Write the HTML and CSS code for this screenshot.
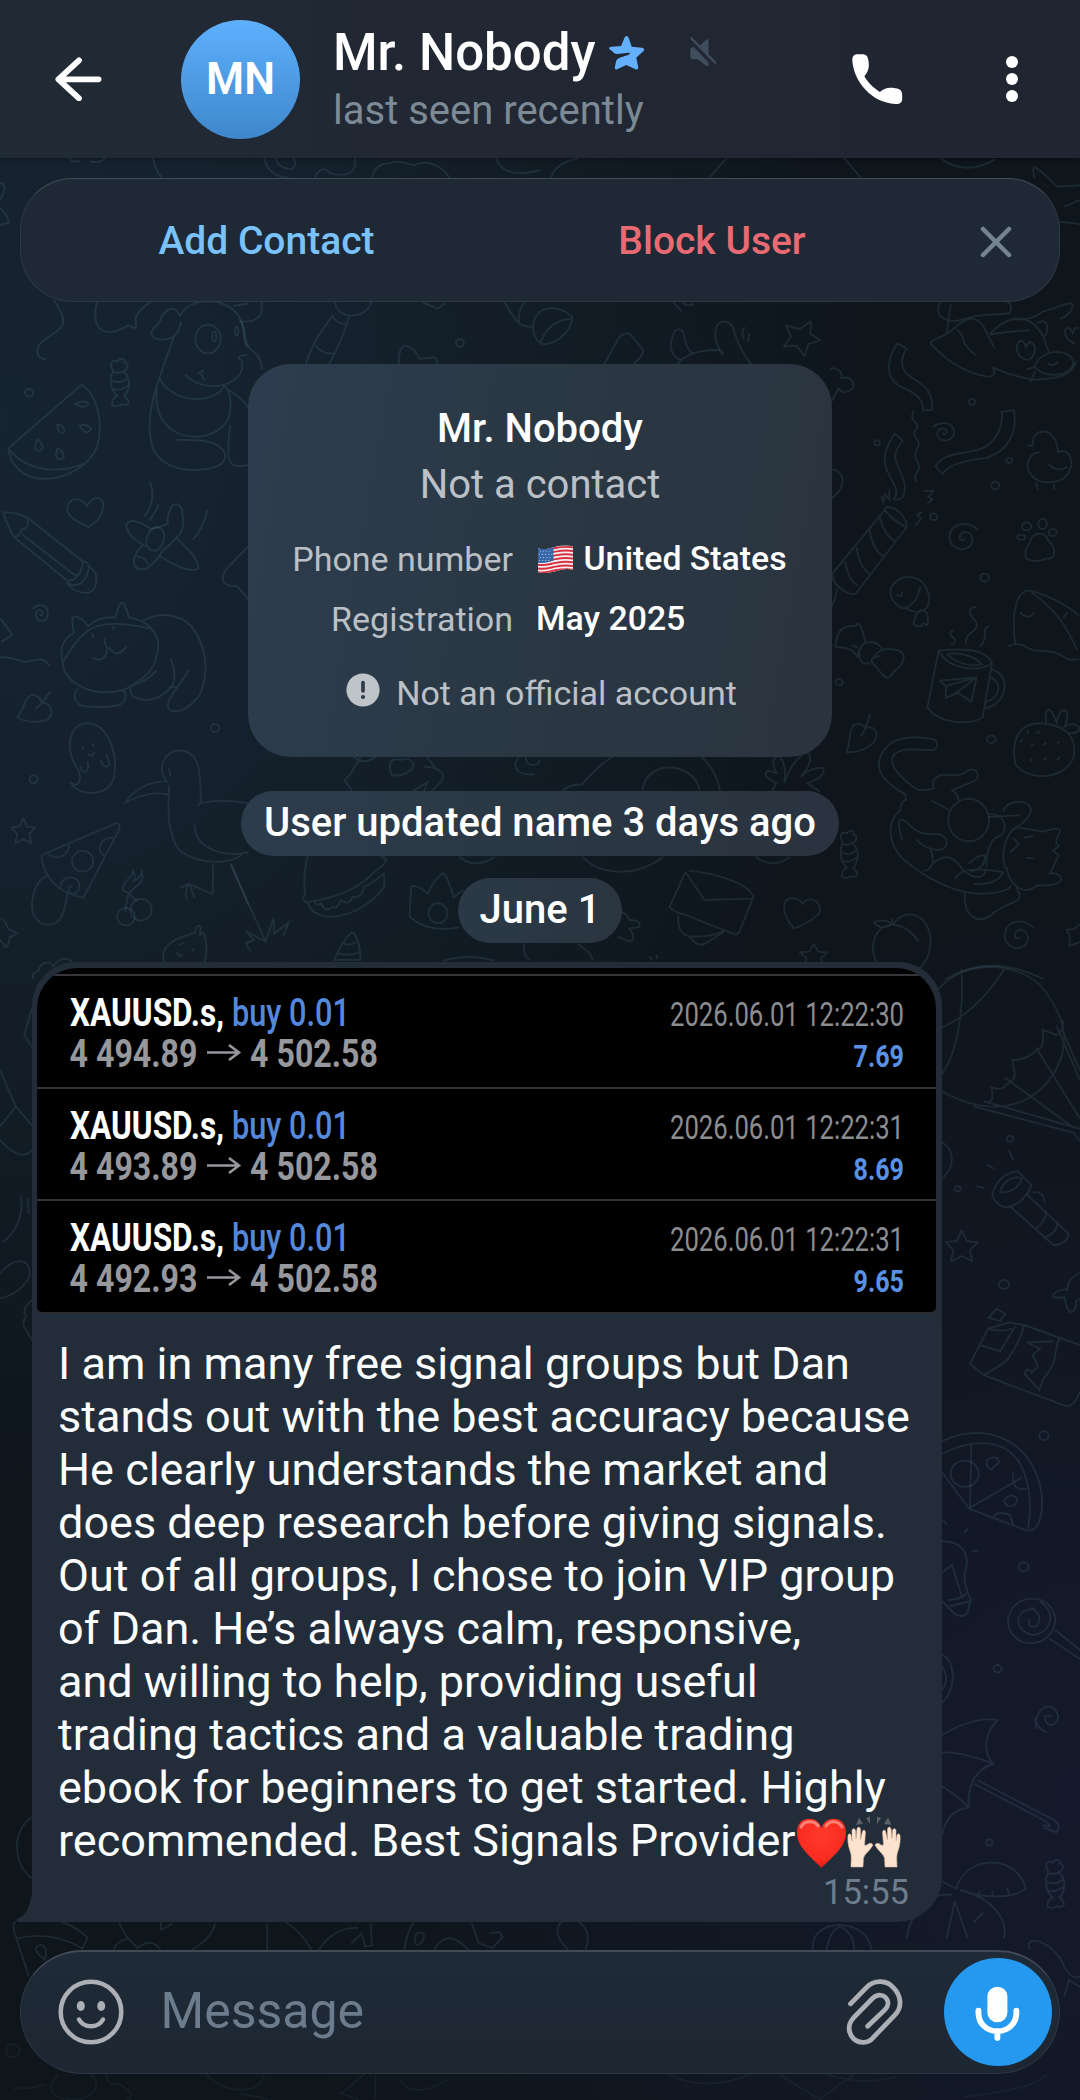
FILE: index.html
```
<!DOCTYPE html>
<html lang="en">
<head>
<meta charset="utf-8">
<title>Mr. Nobody</title>
<link rel="stylesheet" href="styles.css">
</head>
<body>
<svg class="wallpaper" viewBox="0 0 1080 2100" aria-hidden="true">
  <defs>
    <path id="star" d="M0-24 L8-8 L25-6 L13 6 L17 23 L0 15 L-17 23 L-13 6 L-25-6 L-8-8Z" stroke-linejoin="round"/>
    <path id="swirl" d="M-24-10 C-5-24 20-20 22 0 C22 20-8 24-14 8 C-18-8 4-12 6 0 C6 6 0 6-3 3"/>
    <path id="candy" d="M-12-22 C-24-40-10-45-4-40 C4-50 14-44 10-38 C22-38 16-24 8-22 C24-8 22 12 10 26 C24 38 20 46 6 42 C-4 48-18 46-14 38 C-14 30-8 28-4 26 C-20 12-20-10-12-22 M-12-20 Q0-16 8-22 M-17-4 Q2 4 17-8 M-15 12 Q2 18 17 6"/>
    <path id="leaf" d="M-50 24 C-30 15-28-28 0-28 C18-26 22-15 26-10 C60-6 62 20 40 30 C10 38-20 36-50 24 M5 4 Q20 0 50-36"/>
  </defs>
  <g transform="translate(0 300) scale(.3333 .4337)">
    <path d="M162 0 C180 26 196 40 188 56 C176 80 110 90 112 120 C114 134 128 136 138 136 M290 5 C276 60 300 74 330 74 C360 72 370 64 388 58 Q410 70 408 60 L407 40 Q420 20 456 2"/>
    <path d="M245 195 C295 220 312 290 290 340 C270 380 200 414 130 412 C70 412 30 380 25 342 Z M25 342 C80 398 180 400 250 378 M226 240 Q256 228 266 240 Q250 252 226 240Z M238 290 Q262 284 273 297 Q262 316 238 290Z M172 288 Q190 286 194 304 Q174 312 172 288Z M114 320 Q130 336 128 342 Q112 356 104 340 Q108 326 114 320Z M172 342 Q190 346 192 362 Q176 374 168 360Z"/>
    <path d="M540 38 C560 0 620 2 650 4 C700 14 730 40 732 80 C734 100 740 108 745 108 M540 38 C530 10 500 20 485 38 C480 60 456 62 454 76 C460 96 500 94 522 84 Q540 70 543 50 M522 84 L478 180 C450 240 446 290 452 320 C462 380 540 398 620 390 C690 380 692 350 640 330 C600 320 560 324 528 322 M556 172 C590 200 650 206 690 190 C720 180 730 160 726 140 Q700 130 740 126 M592 170 L612 162 M604 170 Q606 180 616 186 M478 180 C520 240 640 242 674 198 C700 220 692 260 684 276 C640 330 520 330 480 266 C466 240 466 200 478 180 M690 288 C684 340 680 374 700 380 Q724 386 745 380 M680 206 Q720 220 745 248 M700 14 L745 8"/>
    <ellipse cx="624" cy="90" rx="38" ry="33"/><ellipse cx="643" cy="84" rx="6" ry="11"/><ellipse cx="710" cy="72" rx="5" ry="10"/>
    <use href="#candy" transform="translate(358 190) scale(1.5 1.2)"/>
    <path d="M266 524 C230 510 200 500 202 480 C206 456 240 452 262 474 C280 450 312 450 310 476 C306 500 290 510 266 524Z"/>
    <path d="M8 490 L40 545 L200 646 C220 650 240 640 250 604 L86 504 Q50 488 8 490 M40 545 Q60 548 66 528 Q90 528 82 504 M66 540 L210 626 Q230 640 240 630 M250 604 C276 600 268 640 240 654 Q214 662 200 650 C210 670 270 690 286 660 C296 630 280 620 264 612"/>
    <path d="M452 528 C410 504 384 506 378 520 C388 550 420 560 438 568 M450 420 Q470 460 434 500 M476 472 Q460 500 446 508 M622 484 Q610 530 578 552 M438 568 C420 560 394 596 404 614 C430 634 460 610 478 590 C490 570 510 570 528 548 C544 540 550 524 549 516 C550 480 540 466 520 472 C500 490 502 510 504 516 Q480 524 452 528 M528 548 C560 570 600 600 594 620 C560 630 510 604 478 590 M410 592 Q430 590 446 610"/>
    <ellipse cx="466" cy="551" rx="24" ry="30" transform="rotate(45 466 551)"/>
    <path d="M188 836 C178 800 190 780 222 768 Q208 720 234 732 Q250 736 264 752 Q300 728 346 732 Q360 690 370 700 Q380 710 386 732 C440 736 480 770 474 800 C470 850 440 870 380 896 C300 920 190 890 188 836 Q230 780 262 764 C300 740 370 744 456 758 M430 738 C490 716 560 726 590 770 C620 810 626 860 600 910 C560 950 520 956 504 940 C500 920 520 910 568 852 M512 826 Q534 870 514 892 C480 920 440 930 404 916 C384 906 390 890 400 888 Q440 880 470 854 M530 892 H506 M234 896 C214 910 226 932 250 936 C290 940 340 940 362 932 C382 920 380 904 366 900 M278 824 Q310 840 322 808 L312 780 M326 800 Q350 830 380 798 M276 768 L280 780 M338 752 L344 760"/>
    <use href="#swirl" x="122" y="722"/><use href="#leaf" x="100" y="938"/>
    <path d="M0 734 L38 772 L4 788 M0 824 C40 822 60 834 80 834 C110 830 130 820 148 844"/>
    <path d="M212 1112 C240 1130 246 1100 232 1080 C190 1030 210 976 264 976 C330 980 350 1050 344 1090 C340 1130 300 1138 260 1136 Q220 1130 212 1112 M240 1074 Q250 1096 260 1086 Q268 1080 262 1064 M302 1062 Q316 1086 328 1070 Q326 1054 318 1048 M262 1046 Q276 1056 284 1042 M246 1030 L250 1038 M276 1022 L282 1030"/>
    <path d="M374 1160 Q420 1110 500 1110 C470 1080 490 1040 540 1038 C590 1040 604 1070 602 1160 Q660 1150 745 1160 M374 1160 Q440 1130 504 1140 M508 1118 C500 1200 510 1240 540 1270 C600 1306 700 1300 728 1276 M584 1210 C584 1270 680 1284 745 1274 M640 1300 L638 1370 L566 1346 M566 1346 Q554 1360 560 1382 M566 1346 L540 1356 M568 1346 L584 1378 M694 1300 L745 1395 M506 1080 L512 1098 M602 1160 L592 1166"/>
    <use href="#star" transform="translate(70 1224) scale(1.4 1.25)"/>
    <path d="M124 1280 L350 1206 Q362 1208 358 1220 L250 1378 C190 1370 130 1340 124 1280 M144 1276 C170 1296 210 1280 206 1254 M316 1282 C280 1270 304 1236 342 1240 M182 1354 C180 1324 240 1324 238 1352 C234 1374 204 1374 206 1356 Q210 1350 218 1352 M144 1326 C100 1340 90 1390 100 1416 C120 1450 170 1446 186 1420 Q200 1390 202 1368"/>
    <ellipse cx="248" cy="1294" rx="32" ry="24"/>
    <path d="M376 1412 Q380 1380 388 1368 Q400 1380 410 1386 M370 1362 C364 1340 390 1340 400 1318 Q408 1330 402 1338 Q420 1334 426 1318 C436 1350 400 1350 388 1368 Z"/>
    <ellipse cx="378" cy="1422" rx="27" ry="20"/><ellipse cx="423" cy="1406" rx="32" ry="25"/>
    <path d="M494 1526 C474 1496 520 1470 584 1460 Q590 1436 602 1446 L600 1464 Q614 1450 616 1476 Q624 1500 614 1526 M530 1504 Q536 1516 548 1510 M538 1488 L550 1482 M576 1502 L582 1494"/>
    <path d="M0 1424 C20 1430 20 1450 30 1452 L50 1460 Q40 1470 30 1466 Q26 1490 18 1492 L0 1476 M102 1566 Q90 1552 116 1546 C120 1524 150 1524 160 1536 C180 1510 216 1520 216 1528 M745 568 L702 602 C650 640 660 660 712 660 L745 690"/>
    <ellipse cx="87" cy="214" rx="12" ry="9"/><ellipse cx="101" cy="1105" rx="12" ry="9"/><ellipse cx="645" cy="987" rx="12" ry="9"/>
  </g>
  <g transform="translate(830 300) scale(.3333 .4337)">
    <path d="M202 100 C160 150 170 190 230 206 C270 220 280 240 280 254 H306 C310 210 280 196 260 186 C220 170 200 150 230 112Z M515 258 L552 254 C564 310 530 350 470 364 C400 370 350 380 338 402 L316 384 C340 350 400 356 450 344 C500 330 520 290 515 258Z M194 308 C150 360 160 380 186 416 Q210 446 190 458 Q206 464 218 454 C240 420 200 390 196 364 Q192 350 218 324Z M252 254 Q240 270 254 280 Q270 290 256 300 Q246 310 264 324 Q270 336 258 348 Q250 360 266 378 Q270 390 258 400 Q252 412 262 420"/>
    <path d="M0 160 C20 150 40 170 34 180 C60 174 76 190 68 204 Q40 220 26 204 L4 234 M0 390 C50 390 50 440 0 458 M154 452 L160 466 L166 448 L178 460 V438 M282 440 H310 L296 454 L308 460 L292 470 M278 488 L262 496 L274 504 L256 520 M6 632 L170 478 C200 476 230 500 230 524 L76 678 C50 680 10 660 6 632 M164 484 Q190 510 230 524 M148 498 Q160 540 194 556 M118 528 Q130 580 160 590 M80 570 Q84 610 120 634 M46 604 Q56 650 84 658 M20 666 Q20 690 0 710"/>
    <path d="M592 336 H608 C604 290 680 290 684 350 C730 340 738 390 700 412 C650 430 600 420 592 380 Q600 350 630 352 M656 378 Q680 400 714 384 M618 420 L624 440 M670 424 L674 438 M588 596 C580 570 600 566 604 550 C620 530 650 540 652 552 C680 570 680 600 650 596 Q616 608 588 596Z"/>
    <ellipse cx="590" cy="522" rx="14" ry="9"/><ellipse cx="638" cy="516" rx="13" ry="12"/><ellipse cx="574" cy="547" rx="12" ry="6"/><ellipse cx="668" cy="536" rx="12" ry="8"/>
    <use href="#swirl" transform="translate(342 304) scale(1.4 1.1)"/><use href="#swirl" transform="translate(400 546) scale(-1.9 1.6)"/><use href="#swirl" transform="translate(566 1464) scale(-1.9 1.7)"/>
    <path d="M182 670 C190 630 290 620 298 690 C296 720 260 726 230 712 C200 710 180 690 182 670 M198 678 Q216 690 216 672 M270 660 Q264 700 224 710 M250 746 Q258 720 270 716 Q284 712 292 724 Q298 750 288 750 Q280 740 274 752 Q254 754 250 746"/>
    <path d="M16 800 C20 760 40 750 76 752 Q90 730 106 790 Q86 800 82 824 Q70 800 16 800 M120 836 C80 850 80 800 106 790 Q140 784 158 806 Q210 800 222 820 C220 850 190 850 184 866 C160 880 160 860 126 836 Q120 824 158 806 M66 796 L84 802 M130 826 L150 820"/>
    <path d="M326 808 L292 940 C330 980 420 980 458 962 L486 838 C470 800 380 804 326 808 C350 850 440 860 484 838 M350 816 Q400 850 456 840 Q420 810 350 816 M484 852 C540 860 540 930 464 942 M480 870 C520 880 510 920 468 926 M328 878 L440 870 L424 926 L384 906 L348 918 V890 L328 878 M440 870 L348 890 M440 870 L370 910 M370 762 Q350 768 372 780 Q380 790 362 796 M440 708 C400 710 430 736 440 744 C446 770 406 760 408 792 M478 752 C450 756 480 780 448 800"/>
    <path d="M556 796 C540 700 570 660 610 672 Q690 690 748 728 M534 798 Q560 790 580 796 C620 820 650 800 690 818 Q720 834 748 828 M604 674 C690 720 720 770 742 808 M570 720 Q596 740 614 720 M700 734 L712 720"/>
    <path d="M556 1070 C540 1000 580 976 630 976 C700 980 740 1000 732 1050 C710 1110 590 1110 556 1070 M650 976 C640 940 660 930 680 974 C690 930 730 940 704 984 Q740 970 750 990 Q730 1006 700 992 M570 1020 L578 1012 M590 1000 L596 992 M620 1000 L630 994 M600 1030 L610 1024 M640 1026 L650 1020 M680 1022 L690 1018 M600 1066 L604 1058 M640 1060 L650 1056 M680 1060 L690 1054"/>
    <path d="M264 1130 C170 1080 160 1040 240 1036 L310 1038 Q330 1030 316 1014 C260 1004 190 1004 160 1040 C120 1090 180 1120 226 1140 L228 1152 Q210 1160 212 1176 C170 1200 170 1250 220 1290 C300 1340 400 1380 500 1366 Q540 1360 544 1350 M264 1130 Q300 1130 312 1126 Q300 1100 340 1094 C380 1100 400 1096 414 1084 C440 1076 456 1100 430 1110 Q400 1120 366 1130 Q386 1140 384 1154 M304 1154 L358 1176 M216 1244 C200 1200 204 1190 230 1204 C260 1230 280 1232 330 1232 C360 1240 356 1270 320 1268 Q280 1264 260 1244 M300 1264 C320 1300 300 1316 280 1316 M308 1300 C350 1270 380 1290 400 1316 C440 1340 470 1330 466 1310 M416 1300 Q440 1280 464 1280 Q470 1310 420 1318 M404 1366 C400 1420 440 1440 480 1420 C520 1390 580 1390 568 1370 L560 1354 M376 1336 Q390 1300 520 1320 Q500 1350 430 1346"/>
    <path d="M520 1180 C530 1150 600 1150 604 1176 C596 1200 570 1210 560 1216 C520 1230 510 1300 530 1310 C540 1350 580 1376 620 1350 C660 1350 690 1350 694 1334 Q690 1320 660 1322 L686 1280 L670 1270 L686 1258 Q670 1250 688 1230 Q700 1210 640 1226 Q600 1220 560 1216 M476 1186 C520 1180 540 1220 510 1236 C480 1240 466 1280 470 1306 M476 1192 L570 1188 M550 1240 L566 1256 L540 1274 M580 1240 L610 1236 M588 1286 L612 1288"/>
    <ellipse cx="416" cy="1199" rx="61" ry="49"/>
    <path d="M190 1440 C220 1400 300 1410 302 1480 C300 1500 296 1520 270 1540 H150 C110 1500 130 1440 190 1440 Q240 1446 266 1480 M130 1436 Q160 1424 186 1438 Q160 1456 130 1436 M184 1424 L188 1440"/>
    <path d="M330 4 C310 40 350 60 420 40 C470 30 500 36 540 30 Q550 10 530 4 M302 100 C300 90 340 90 380 60 C420 36 440 40 460 60 L494 112 M302 100 C360 150 420 170 470 176 Q500 180 490 156 Q560 180 620 184 C680 180 720 180 740 140 M362 10 L350 80 M380 68 Q400 80 404 100 Q420 120 440 128 M480 78 C540 30 600 30 640 84 L656 120 M550 44 Q600 50 640 26 C680 20 720 0 728 10 Q730 30 690 44 M480 80 Q530 72 600 70 M620 54 Q650 40 652 66 Q650 84 640 84 M614 154 C630 110 730 110 730 146 C720 180 640 180 614 154 M652 146 Q670 156 684 142 M614 154 L590 160 M616 164 L600 190"/>
    <path d="M598 138 C560 140 550 100 572 94 Q584 94 588 110 Q594 94 606 98 C624 110 612 130 598 138 M735 100 Q700 90 706 68 Q716 58 728 76 Q734 60 748 66"/>
    <use href="#candy" transform="translate(56 1278) scale(1.4 1.2)"/>
    <use href="#leaf" transform="translate(86 1004) scale(.95 1) rotate(-18)"/>
    <path d="M750 1440 L732 1450 L710 1452 L720 1468 L718 1490 L750 1480 M346 1566 Q480 1504 640 1566"/>
    <g><ellipse cx="426" cy="235" rx="9" ry="7"/><ellipse cx="141" cy="329" rx="9" ry="6"/><ellipse cx="538" cy="370" rx="9" ry="6"/><ellipse cx="496" cy="428" rx="12" ry="9"/><ellipse cx="311" cy="500" rx="11" ry="8"/><ellipse cx="464" cy="640" rx="13" ry="9"/><ellipse cx="27" cy="881" rx="11" ry="7"/><ellipse cx="484" cy="1013" rx="13" ry="9"/></g>
  </g>
  <g transform="translate(900 960) scale(.3333 .625)">
    <path d="M110 50 C180 0 340 0 420 40 C500 90 520 140 450 190 C380 240 260 250 126 210 M184 14 C194 80 170 150 126 182 M316 12 C260 60 200 90 126 108 M252 226 Q286 232 274 204 Q310 210 316 200 C360 190 340 180 338 160 Q380 160 410 144 Q436 140 428 112 L470 120 Q490 116 490 96 M470 106 L540 192 M408 140 L540 254 M314 188 L520 268 M252 226 L540 270 M220 234 L520 276 L540 290 M484 108 L540 178 M126 292 C160 300 170 330 126 350"/>
    <path d="M276 376 C290 350 320 340 354 338 L394 360 L382 376 L506 438 Q500 456 460 456 L330 394 L318 396 Q286 392 276 376 M394 360 C380 380 350 394 318 396 M300 372 C310 350 350 344 366 350 Q350 372 300 372 M398 372 Q430 368 434 388 M438 400 Q440 420 404 430 M474 420 Q468 440 430 444 M326 304 L340 320 M262 328 L282 334 M230 362 L254 365"/>
    <use href="#star" transform="translate(185 458) scale(1.9 1.05)"/>
    <path d="M540 500 Q500 510 502 528 C480 524 450 536 462 540 L494 540 C500 570 530 570 528 546 L540 542 M210 646 L264 590 L326 580 L372 584 L540 616 M210 646 L250 664 L490 712 Q520 720 540 690 M250 664 Q300 650 322 640 C360 610 370 590 372 584 M240 616 L300 626 L346 586 M264 590 Q310 596 336 590 M382 612 L460 610 M480 604 C460 620 480 640 430 670 L418 688 L374 662 Q380 650 396 660 L414 650 L398 632 L420 622 L382 612 M266 572 L290 558 L316 566 L300 578Z"/>
    <path d="M126 770 C240 740 380 760 420 840 C436 880 420 920 376 912 L208 878 L126 820 M126 790 C240 760 340 770 372 820 Q400 860 384 910 M214 776 L210 876 L366 828 M280 892 Q290 880 330 888 L340 904 M340 820 Q330 850 380 846 M260 800 Q290 790 298 804 Q280 810 274 816 Q256 810 260 800 M312 866 Q330 850 352 862 Q350 876 322 874Z"/>
    <ellipse cx="194" cy="822" rx="42" ry="21"/>
    <path d="M126 930 C200 930 210 960 194 980 Q190 1000 212 1022 L204 1042 Q190 1056 160 1044 L126 1026 M126 980 L156 968 L188 1022 M144 1024 Q180 1024 204 1012 M150 1034 L210 1026 M130 896 L140 904 M192 916 L204 910 M218 946 L234 945 M126 1112 C170 1120 168 1170 126 1188 M126 1130 Q150 1150 126 1168"/>
    <path d="M324 1058 C330 1010 460 1010 466 1056 C460 1104 330 1106 324 1058 M420 1026 C480 1050 440 1080 400 1080 C340 1074 340 1040 400 1038 Q430 1050 410 1066 Q380 1070 388 1054 M466 1072 L540 1104 M448 1086 L540 1118"/>
    <path d="M408 1230 C400 1190 470 1184 474 1212 C470 1230 430 1226 436 1210 Q450 1206 454 1212 M440 1236 Q410 1230 404 1212 M126 1240 Q220 1210 292 1216 C250 1240 250 1270 280 1286 Q200 1300 206 1356 Q140 1360 126 1400 M126 1268 C180 1266 250 1280 280 1286 M126 1322 Q180 1340 206 1356 M232 1312 L440 1370 Q490 1380 470 1396 L430 1388 M222 1318 L430 1376 Q470 1390 430 1384"/>
    <use href="#candy" transform="translate(464 1478) scale(1.5 .85)"/>
    <path d="M168 1486 C200 1430 350 1430 378 1486 C330 1504 240 1500 180 1488 C280 1500 330 1540 310 1566 M126 1474 L168 1486 M156 1496 C100 1490 30 1520 20 1566 M164 1506 L140 1566 M164 1506 L204 1566 M230 1498 L240 1490 M280 1500 L276 1490 M330 1496 L320 1484 M220 1540 L250 1524"/>
    <g><ellipse cx="330" cy="286" rx="10" ry="5"/><ellipse cx="173" cy="366" rx="9" ry="4"/><ellipse cx="312" cy="519" rx="15" ry="7"/><ellipse cx="432" cy="761" rx="14" ry="7"/><ellipse cx="371" cy="971" rx="15" ry="7"/><ellipse cx="293" cy="1134" rx="12" ry="6"/><ellipse cx="268" cy="1412" rx="10" ry="5"/></g>
  </g>
  <g transform="translate(230 740) scale(.3954 .3333)">
    <path d="M310 155 L290 120 L306 100 L330 50 M370 48 Q340 80 310 48 M434 60 C400 50 400 80 410 106 C440 110 466 90 464 70 Q450 50 434 60 M490 80 L520 84 L496 48 L524 90 Q550 100 530 130 L510 155 M460 155 L500 126 L490 155 M734 48 C710 70 720 110 770 102 M750 48 C740 80 780 84 784 60 M840 155 Q860 130 890 134 C920 90 940 70 970 48 M1190 48 Q1230 90 1240 155 M1044 150 C1050 60 1170 60 1188 150 M1370 155 L1382 130 C1350 110 1350 100 1360 92 L1382 100 C1370 70 1370 50 1390 48 Q1410 80 1402 130 Q1420 60 1460 36 Q1480 60 1444 110 Q1470 80 1500 84 Q1510 110 1460 130 L1492 155"/>
    <path d="M196 350 C186 400 186 430 190 462 C180 480 186 490 206 484 C290 470 340 430 370 390 C400 370 400 350 380 350 M196 484 C210 560 330 540 390 440 V400 M214 486 Q220 500 230 490 Q240 520 260 500 Q270 510 280 480 Q300 500 310 470 Q330 480 340 440 Q360 430 390 400 M454 530 L458 440 Q470 430 500 460 Q520 410 540 400 Q550 410 566 472 L590 450 M454 530 Q500 580 580 562 M1152 396 L1112 500 Q1120 516 1150 524 L1270 580 Q1286 590 1290 570 L1324 470 C1310 430 1230 400 1160 392 M1152 396 L1200 480 L1324 476 M1134 526 Q1130 590 1170 590 Q1230 590 1250 570 M1164 592 Q1180 620 1200 612 L1250 576 M1426 566 C1400 530 1390 480 1420 474 Q1440 474 1448 492 C1470 460 1500 490 1490 520 C1476 540 1440 560 1426 566 M0 370 L90 604 L110 536 L112 580 L148 548 L134 590 M90 604 L40 574 L60 600 L40 610 L52 634 M310 576 C290 590 270 640 264 660 H330 Q330 600 310 576 M286 608 Q300 620 320 606 M272 640 Q300 650 330 636 M580 350 Q620 390 670 350 M890 350 C940 410 1030 410 1096 350 M1330 350 Q1370 390 1416 350 M980 520 Q1000 510 1010 540 Q1040 540 1036 560 L1010 566 Q1030 600 1010 604 L980 590 M540 662 Q600 640 670 662 M744 612 Q740 650 760 660 M880 612 L910 640 L918 662 M1060 650 L1068 660 M1080 644 V656"/>
    <ellipse cx="526" cy="520" rx="24" ry="30"/>
    <use href="#star" transform="translate(1476 646) scale(1.4)"/>
  </g>
  <g transform="translate(240 300) scale(.3954 .3333)">
    <path d="M0 64 C50 70 60 40 54 6 M0 60 C20 90 0 130 40 160 Q56 180 54 208 M240 6 C244 60 320 60 332 6 M236 44 Q180 130 166 194 M276 48 Q260 120 224 194 M234 50 Q250 76 270 70 M190 136 Q210 164 238 160 M460 6 L500 26 L520 8 M402 194 Q400 140 418 136 Q440 140 454 176 L490 172 Q504 180 494 194 M668 6 C700 70 710 84 742 80 M720 6 Q700 40 706 68 M742 80 C740 30 790 0 840 50 C840 100 790 140 760 130 Q740 110 742 80 M840 56 Q780 60 760 128 M920 194 L960 110 Q980 90 992 110 L1018 148 Q1026 160 994 194 M1104 194 C1130 160 1160 150 1210 150 L1222 164 C1190 110 1200 66 1226 64 C1260 70 1240 120 1294 194 M1144 162 Q1126 140 1124 110 C1120 80 1100 80 1094 110 C1080 150 1100 180 1120 178 M1276 80 Q1266 100 1274 116 M1288 102 L1284 126 M1096 6 L1116 34 M1120 6 Q1130 24 1148 10"/>
    <use href="#star" transform="translate(1420 118) scale(1.9 2.1) rotate(170)"/>
    <ellipse cx="556" cy="129" rx="10" ry="12"/>
  </g>
  <g transform="scale(.3444 .3333)">
    <path d="M200 474 Q210 490 232 482 M260 484 Q290 490 306 474 M444 474 Q450 510 470 534 M766 474 Q780 530 840 534 M800 474 Q810 510 850 506 Q866 490 850 474 M914 534 Q930 490 960 520 Q1040 540 1030 474 M1080 534 Q1090 490 1130 490 C1160 480 1180 490 1200 496 Q1260 470 1306 534 M1440 474 Q1460 540 1568 510 M0 550 Q20 550 10 580 L0 600 M0 626 Q20 640 26 668 L0 676"/>
    <path d="M1600 534 Q1610 490 1680 474 M2060 534 L2110 474 M2450 474 L2500 534 M2730 474 Q2800 530 2890 478 M3004 534 C2990 480 3010 500 3070 560 L3136 556 M3090 620 L3136 600 M3070 665 L3136 672"/>
  </g>
  <g transform="translate(0 940) scale(.3444 .3333)">
    <path d="M116 130 L70 284 L93 322 M0 390 L46 500 L93 556 M0 560 L46 500 M0 600 Q60 670 93 630 M60 766 Q74 850 8 908 M80 776 L84 822 M0 1000 C40 950 90 950 86 1010 Q60 1060 0 1076 M93 1080 Q60 1110 76 1130 Q60 1150 76 1170 L93 1200"/>
  </g>
  <g transform="translate(0 1800) scale(.3444 .3333)">
    <path d="M93 50 C30 100 40 190 93 236 M46 366 Q36 370 40 390 L84 530 M180 366 Q220 380 254 412 L240 446 Q150 390 48 416 M120 434 Q96 440 110 460 L130 480 Q140 440 120 434 M346 366 Q360 410 400 444 Q440 410 466 450 M330 450 Q340 420 372 416 M624 370 Q620 410 556 450 M466 366 L468 390 L500 370 M776 450 V370 M830 366 Q880 400 904 450 M926 450 Q970 380 1040 384 M1020 430 L1050 400 L1060 440 L1080 436 L1076 370 M1174 450 Q1180 400 1200 370 M1206 430 Q1200 390 1230 400 Q1236 430 1206 436 M1260 450 Q1300 380 1360 450 M1370 370 L1390 430 L1430 444 L1460 410 L1450 396 L1420 400"/>
    <g opacity=".5"><circle cx="38" cy="752" r="20"/><path d="M170 822 C120 880 170 900 220 898 C290 890 290 840 260 822 M40 870 Q60 860 80 866 L130 854 M310 822 Q310 860 340 850 Q400 880 370 900 M600 822 C640 880 760 890 766 822 M700 880 L780 898 M1060 822 L990 880 L1040 898 M1090 822 V898 M1160 840 Q1200 900 1300 840 M1940 822 C2000 860 2100 860 2180 822 M2260 822 L2380 898 L2480 822 M2400 822 Q2500 860 2600 830 M2800 890 Q3000 870 3040 822"/></g>
    <path d="M1630 366 Q1600 400 1650 450 M1680 366 Q1720 390 1700 450 M2360 450 C2350 350 2520 350 2530 450 M2400 450 Q2410 390 2440 380 Q2480 400 2480 450 M2990 450 C2970 400 3060 420 3090 500 Q3110 540 3136 530 M3090 590 L3104 540 L3136 560"/>
  </g>
</svg>

<main class="chat">
  <header class="header">
    <svg class="back" viewBox="158 170 137 132" preserveAspectRatio="none"><path d="M228 180 L168 237 L228 294 M168 237 H285" fill="none" stroke="#fff" stroke-width="17" stroke-linecap="round" stroke-linejoin="round"/></svg>
    <div class="avatar">MN</div>
    <div class="peer">
      <div class="peer-name">Mr. Nobody
        <svg class="star" viewBox="203 108 103 101" preserveAspectRatio="none"><path fill="#64b0fc" d="M254 108q4 0 6 5l9 27 30 3q10 3 4 10l-21 20 6 28q0 10-8 7l-27-13-26 13q-8 2-7-6l4-20q2-6 10-9l26-9q8-5 1-6l-34 4q-9 0-13-7l-10-8q-3-6 5-7l29-2 10-25q2-5 6-5z"/></svg>
        <svg class="mute" viewBox="437 110 79 89" preserveAspectRatio="none"><g fill="#3f4c5b"><path d="M465 136L486 117q5-2 5 3v44zM438 147q0-6 6-6h5l42 45v8q0 6-6 3l-26-20h-15q-6 0-6-6z"/><path d="M441 114L511 187" stroke="#3f4c5b" stroke-width="7" stroke-linecap="round"/></g></svg>
      </div>
      <div class="peer-status">last seen recently</div>
    </div>
    <svg class="call" viewBox="908 161 147 151" preserveAspectRatio="none"><path fill="#fff" d="M925 162H938C950 162 954 168 956 182C959 200 956 212 944 228C953 245 970 263 989 275C1005 262 1015 261 1034 264C1050 266 1054 272 1054 286V296C1054 307 1046 312 1034 311C965 307 914 245 909 182C908 168 914 162 925 162Z"/></svg>
    <div class="more"><i></i><i></i><i></i></div>
  </header>

  <section class="actions">
    <div class="add">Add Contact</div>
    <div class="block">Block User</div>
    <svg class="close" viewBox="0 0 32 32"><path d="M3 3L29 29M29 3L3 29" stroke="#74848f" stroke-width="4.5" stroke-linecap="round"/></svg>
  </section>

  <section class="info">
    <div class="info-name">Mr. Nobody</div>
    <div class="info-sub">Not a contact</div>
    <div class="facts">
      <span class="key">Phone number</span>
      <span class="val"><svg class="flag" viewBox="0 0 36 28"><defs><clipPath id="wave"><path d="M1 3C8 5 12 3 18 1.500S30 0 35 1V24C28 22 24 24 18 25.500S6 28 1 26.500Z"/></clipPath></defs><g clip-path="url(#wave)"><path fill="#f3f0f2" d="M0 0H36V28H0Z"/><path d="M0 4.500C8 6 12 4 18 2.800S30 1.300 36 2.300M0 8C8 9.500 12 7.500 18 6.300S30 4.800 36 5.800M0 11.700C8 13.200 12 11.200 18 10S30 8.500 36 9.500M0 15.300C8 16.800 12 14.800 18 13.600S30 12.100 36 13.100M0 19C8 20.500 12 18.500 18 17.300S30 15.800 36 16.800M0 22.600C8 24.100 12 22.100 18 20.900S30 19.400 36 20.400M0 26.200C8 27.700 12 25.700 18 24.500S30 23 36 24" stroke="#d8303e" stroke-width="1.900" fill="none"/><path fill="#3767a8" d="M0 0H16V15C11 17 6 18 0 17Z"/><path d="M3 6H15M2 9H15M3 12H15M2 15H12" stroke="#a9c2e2" stroke-width="1" stroke-dasharray="1 2"/></g></svg>United States</span>
      <span class="key">Registration</span>
      <span class="val">May 2025</span>
    </div>
    <div class="notice">
      <svg viewBox="0 0 34 34"><circle cx="17" cy="17" r="16.600" fill="#bfc4c9"/><path d="M17 9.500V18" stroke="#2c3946" stroke-width="3.600" stroke-linecap="round"/><circle cx="17" cy="24" r="2.100" fill="#2c3946"/></svg>
      <span>Not an official account</span>
    </div>
  </section>

  <div class="pill renamed">User updated name 3 days ago</div>
  <div class="pill date">June 1</div>

  <article class="bubble">
    <svg class="tail" viewBox="0 0 17 40"><path fill="#222d39" d="M17 0C16 18 12 34 1 37Q-1 40 3 40H17Z"/></svg>
    <div class="photo">
      <div class="trade"><svg viewBox="0 0 899 110">
        <text class="sym" x="33" y="50" textLength="154" lengthAdjust="spacingAndGlyphs">XAUUSD.s,</text><text class="side" x="195" y="50" textLength="118" lengthAdjust="spacingAndGlyphs">buy 0.01</text>
        <text class="price" x="32.500" y="90.500" textLength="128" lengthAdjust="spacingAndGlyphs">4 494.89</text><path class="arrow" d="M170 76.500H201M192 69L202 76.500L192 84"/><text class="price" x="213" y="90.500" textLength="128" lengthAdjust="spacingAndGlyphs">4 502.58</text>
        <text class="when" x="633" y="50" textLength="234" lengthAdjust="spacingAndGlyphs">2026.06.01 12:22:30</text><text class="gain" x="816.500" y="90.500" textLength="50.500" lengthAdjust="spacingAndGlyphs">7.69</text></svg></div>
      <div class="trade"><svg viewBox="0 0 899 110">
        <text class="sym" x="33" y="50" textLength="154" lengthAdjust="spacingAndGlyphs">XAUUSD.s,</text><text class="side" x="195" y="50" textLength="118" lengthAdjust="spacingAndGlyphs">buy 0.01</text>
        <text class="price" x="32.500" y="90.500" textLength="128" lengthAdjust="spacingAndGlyphs">4 493.89</text><path class="arrow" d="M170 76.500H201M192 69L202 76.500L192 84"/><text class="price" x="213" y="90.500" textLength="128" lengthAdjust="spacingAndGlyphs">4 502.58</text>
        <text class="when" x="633" y="50" textLength="234" lengthAdjust="spacingAndGlyphs">2026.06.01 12:22:31</text><text class="gain" x="816.500" y="90.500" textLength="50.500" lengthAdjust="spacingAndGlyphs">8.69</text></svg></div>
      <div class="trade"><svg viewBox="0 0 899 110">
        <text class="sym" x="33" y="50" textLength="154" lengthAdjust="spacingAndGlyphs">XAUUSD.s,</text><text class="side" x="195" y="50" textLength="118" lengthAdjust="spacingAndGlyphs">buy 0.01</text>
        <text class="price" x="32.500" y="90.500" textLength="128" lengthAdjust="spacingAndGlyphs">4 492.93</text><path class="arrow" d="M170 76.500H201M192 69L202 76.500L192 84"/><text class="price" x="213" y="90.500" textLength="128" lengthAdjust="spacingAndGlyphs">4 502.58</text>
        <text class="when" x="633" y="50" textLength="234" lengthAdjust="spacingAndGlyphs">2026.06.01 12:22:31</text><text class="gain" x="816.500" y="90.500" textLength="50.500" lengthAdjust="spacingAndGlyphs">9.65</text></svg></div>
    </div>
    <p class="text">I am in many free signal groups but Dan<br>stands out with the best accuracy because<br>He clearly understands the market and<br>does deep research before giving signals.<br>Out of all groups, I chose to join VIP group<br>of Dan. He’s always calm, responsive,<br>and willing to help, providing useful<br>trading tactics and a valuable trading<br>ebook for beginners to get started. Highly<br>recommended. Best Signals Provider<svg class="heart" viewBox="0 0 51 50"><defs><radialGradient id="red" cx=".5" cy=".35" r=".75"><stop offset="0" stop-color="#ff3b2c"/><stop offset=".65" stop-color="#f92b20"/><stop offset="1" stop-color="#c80e0e"/></radialGradient></defs><path fill="url(#red)" d="M25.500 50C14 38 1 29 1 14.500C1 6 6 .8 13 .8C19 .8 23.500 4 25.500 10C27.500 4 32 .8 38 .8C45 .8 50 6 50 14.500C50 29 37 38 25.500 50Z"/><path d="M5 9Q8 3.500 14 3.800T22 8M30 8Q33 3.500 38 3.800T46 9" fill="none" stroke="#ff9a8c" stroke-width="3" stroke-linecap="round" opacity=".8"/></svg><svg class="hands" viewBox="0 0 54 52"><g fill="#5c5f63"><path d="M9 9L12 1.500L16 8ZM19 2L23 .5V8ZM30 .5L34 2L30 8ZM37 8L41 1.500L44.500 9Z"/></g><g id="hand"><path fill="#fbe3cf" stroke="#d9b49a" stroke-width=".6" d="M4 51C4 44 5 40 3 35C1 29 .5 25 1 19Q2.500 16.500 4 19L5 25L5 14Q6.500 11 8.500 14L9 23L10 12.500Q11.500 9.500 13.500 12.500L13.500 24L15.500 15Q17.500 12.500 18.500 16L17.500 29Q20 30 22 27.500Q25 26.500 26 29C23 35 18 37 16.500 42L16 51Z"/></g><use href="#hand" transform="translate(54 0) scale(-1 1)"/></svg></p>
    <time class="time">15:55</time>
  </article>

  <footer class="composer">
    <svg class="smile" viewBox="0 0 66 66" fill="none" stroke="#acafb4" stroke-width="4.500" stroke-linecap="round"><circle cx="33" cy="33" r="30.300"/><path d="M21 40.500C26 49.500 40 49.500 45 40.500"/><g fill="#acafb4" stroke="none"><ellipse cx="22.800" cy="27" rx="4" ry="5"/><ellipse cx="43.200" cy="27" rx="4" ry="5"/></g></svg>
    <div class="placeholder">Message</div>
    <svg class="clip" viewBox="888 687 166 197" preserveAspectRatio="none"><path d="M901 761L948 712C970 688 1008 690 1026 713C1050 738 1052 772 1030 795L967 862C952 880 926 880 911 866C893 848 893 822 909 804L963 747C976 732 992 732 1002 741C1014 753 1012 768 1001 779L951 828" fill="none" stroke="#acafb4" stroke-width="14" stroke-linecap="round"/></svg>
    <div class="mic"><svg viewBox="1265 710 130 166" preserveAspectRatio="none"><rect x="1301" y="712" width="58" height="107" rx="29" fill="#fff"/><path d="M1275 784V790C1275 864 1385 864 1385 790V784M1330 846V866" fill="none" stroke="#fff" stroke-width="17" stroke-linecap="round"/></svg></div>
  </footer>
</main>
</body>
</html>
```
FILE: styles.css
```
* { box-sizing: border-box; }
body {
  margin: 0;
  width: 1080px;
  height: 2100px;
  overflow: hidden;
  font-family: Roboto, "Liberation Sans", sans-serif;
  color: #fff;
  background:
    radial-gradient(900px 1100px at 0 420px, #162430 0, #15222e 30%, rgba(21, 34, 46, 0) 100%),
    radial-gradient(800px 900px at 1080px 1800px, #141a2b 0, rgba(20, 26, 43, 0) 100%),
    #0e151b;
}
svg { display: block; flex: none; }
.wallpaper {
  position: absolute;
  left: 0;
  top: 0;
  width: 1080px;
  height: 2100px;
  z-index: -1;
  fill: none;
  stroke: rgba(112, 160, 186, .14);
  stroke-width: 1.9;
}
.wallpaper path, .wallpaper ellipse, .wallpaper circle { vector-effect: non-scaling-stroke; }
.chat { display: flex; flex-direction: column; height: 2100px; }

.header {
  display: flex;
  height: 158px;
  flex: none;
  background: linear-gradient(90deg, #202b35, #212733 45%, #202631);
  box-shadow: 0 1px 5px rgba(0, 0, 0, .35);
}
.back { width: 47px; height: 44px; margin: 57px 0 0 54.500px; }
.avatar {
  width: 119px;
  height: 119px;
  margin: 20px 0 0 79.500px;
  border-radius: 50%;
  background: linear-gradient(#5eb0fd, #3f87cc);
  font-size: 43.500px;
  font-weight: 600;
  line-height: 119px;
  text-align: center;
}
.peer { width: 519px; padding-top: 24px; margin-left: 33px; }
.peer-name { display: flex; height: 58px; line-height: 57px; font-size: 51px; font-weight: 500; white-space: nowrap; }
.star { width: 35.500px; height: 33.700px; margin: 12px 0 0 14px; }
.mute { width: 27px; height: 29.700px; margin: 12.700px 0 0 45px; }
.peer-status { margin-top: 4px; line-height: 50px; font-size: 40px; color: #7c8a96; }
.call { width: 50.500px; height: 50.300px; margin-top: 53.700px; }
.more { display: flex; flex-direction: column; gap: 5.200px; margin: 56px 0 0 103px; }
.more i { width: 12px; height: 12px; border-radius: 50%; background: #fff; }

.actions {
  display: flex;
  flex: none;
  height: 124px;
  margin: 20px 20px 0;
  padding-left: 23px;
  border: 1.500px solid #2d3843;
  border-top-color: #414c56;
  border-radius: 52px;
  background: #1e2935;
  font-size: 39px;
  font-weight: 500;
  line-height: 125px;
  text-align: center;
}
.add { width: 445px; color: #7ac2fb; }
.block { width: 446px; color: #e96a73; }
.close { width: 32px; height: 32px; margin: 47px 0 0 45px; }

.info {
  width: 584px;
  height: 393px;
  flex: none;
  margin: 62px auto 0;
  padding-top: 37px;
  border-radius: 43px;
  background: linear-gradient(100deg, #2d3d4f, #2a3844 48%, #2a343f);
  text-align: center;
}
.info-name { line-height: 56px; font-size: 40px; font-weight: 500; }
.info-sub { line-height: 56px; font-size: 40px; color: #bcc1c7; }
.facts {
  display: grid;
  grid-template-columns: 265px 1fr;
  column-gap: 23px;
  margin-top: 16px;
  line-height: 60.300px;
  font-size: 34px;
}
.key { text-align: right; color: #bac0c6; }
.val { display: flex; font-size: 33.800px; font-weight: 500; text-align: left; }
.flag { width: 37px; height: 29px; margin: 15.500px 9.500px 0 1px; }
.notice {
  display: flex;
  justify-content: center;
  gap: 16px;
  margin-top: 18.500px;
  padding-left: 3px;
  line-height: 50px;
  font-size: 34px;
  color: #bcc1c7;
}
.notice svg { width: 34px; height: 34px; margin-top: 5px; }

.pill {
  flex: none;
  height: 65px;
  margin: 22px auto 0;
  border-radius: 32.500px;
  font-size: 40px;
  font-weight: 500;
  line-height: 63px;
  text-align: center;
}
.renamed { width: 598px; margin-top: 34px; background: linear-gradient(90deg, #2d3c4d, #2a3843 50%, #2a333f); }
.date { width: 164px; background: linear-gradient(90deg, #2b3947, #2a3540); }

.bubble {
  position: relative;
  width: 910px;
  height: 960px;
  flex: none;
  margin: 19px 0 0 32px;
  padding: 6px 6px 0 5px;
  border-radius: 44px 44px 45px 0;
  background: #222d39;
}
.tail { position: absolute; left: -16px; bottom: 0; width: 17px; height: 40px; }
.photo {
  height: 345.500px;
  padding-top: 6px;
  border-radius: 40px 40px 6px 6px;
  overflow: hidden;
  border-bottom: 2px solid #2c2b30;
  background: #000;
}
.trade { height: 112.500px; border-top: 2.500px solid #37353a; }
.trade svg { width: 899px; height: 110px; }
.trade text { font-family: Roboto, "Liberation Sans", sans-serif; }
.trade .sym { font-size: 38px; font-weight: 700; fill: #fff; }
.trade .side { font-size: 38px; font-weight: 500; fill: #5388dc; }
.trade .price { font-size: 38px; font-weight: 700; fill: #97989e; }
.trade .when { font-size: 32.500px; fill: #8c8d90; }
.trade .gain { font-size: 32px; font-weight: 700; fill: #5991e6; }
.arrow { fill: none; stroke: #97989e; stroke-width: 2.600; }
.text { margin: 23.500px 0 0 21px; line-height: 53px; font-size: 45px; white-space: nowrap; color: #fcfdfe; }
.heart, .hands { display: inline-block; vertical-align: -12px; }
.heart { width: 51px; height: 50px; }
.hands { width: 54px; height: 52px; }
.time { display: block; margin: 4px 27px 0 0; text-align: right; line-height: 40px; font-size: 34.500px; color: #6e7d8d; }

.composer {
  display: flex;
  flex: none;
  height: 124px;
  margin: 28px 20px 0;
  border: 1.500px solid #2c3844;
  border-top: 2.500px solid #414b56;
  border-radius: 62px;
  background: linear-gradient(#1e2a37, #1d2732);
}
.smile { width: 66px; height: 66px; margin: 26.500px 0 0 36.500px; }
.placeholder { width: 690px; margin: 23.500px 0 0 37px; line-height: 70px; font-size: 50px; color: #6c7c8c; }
.clip { width: 57px; height: 66px; margin: 26.500px 0 0 -5px; }
.mic { width: 108px; height: 108px; margin: 6px 0 0 41px; border-radius: 50%; background: #2499ef; }
.mic svg { width: 44.800px; height: 55.300px; margin: 28px auto 0; }
```
